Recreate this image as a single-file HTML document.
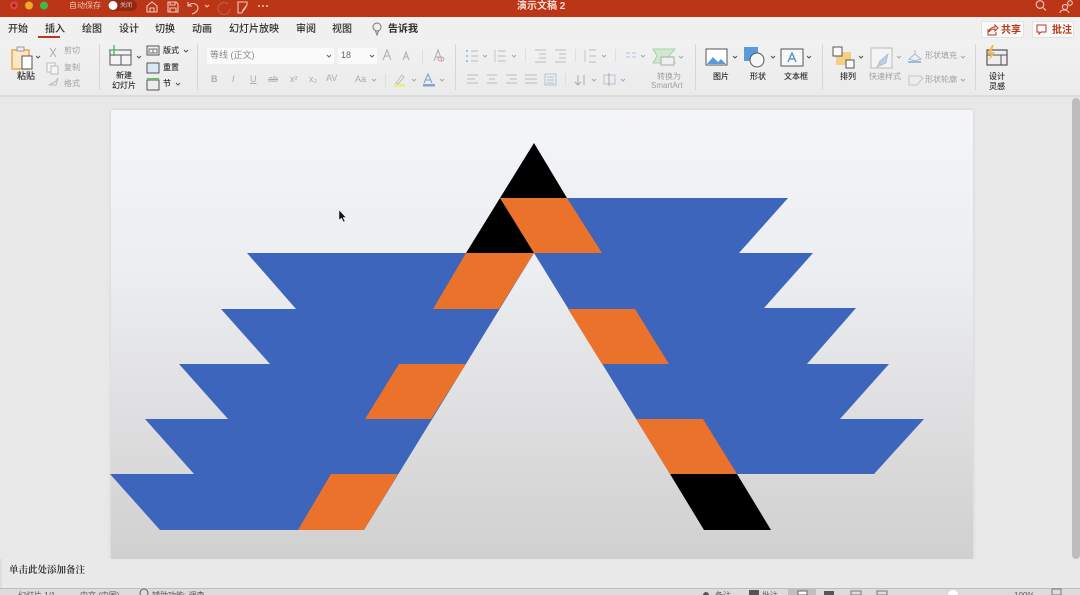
<!DOCTYPE html>
<html lang="zh"><head><meta charset="utf-8"><title>演示文稿2</title>
<style>
html,body{margin:0;padding:0;width:1080px;height:595px;overflow:hidden;background:#e8e8e8;font-family:"Liberation Sans","Noto Sans CJK SC",sans-serif;color:#333}
#w{position:absolute;left:0;top:0;width:1080px;height:595px;overflow:hidden;background:#e8e8e8;filter:blur(.35px)}
.a{position:absolute;white-space:nowrap;line-height:1}
#tb{position:absolute;left:0;top:0;width:1080px;height:17px;background:#bb3517}
#tabs{position:absolute;left:0;top:17px;width:1080px;height:25px;background:#f0f0f0}
#rib{position:absolute;left:0;top:42px;width:1080px;height:53px;background:linear-gradient(#f1f1f1,#ebebeb);border-bottom:2px solid #dcdcdc}
.t{font-size:10px;color:#2e2e2e;top:25px;font-weight:500}
.s{font-size:8px;color:#2e2e2e;font-weight:500}
.g{font-size:8px;color:#a0a0a0}
.sep{position:absolute;width:1px;background:#d6d6d6;top:44px;height:46px}
.sm{position:absolute;width:1px;background:#dedede}
#slide{position:absolute;left:111px;top:110px;width:862px;height:449px;background:linear-gradient(#f4f5f9 0%,#eceef1 35%,#e0e0e2 65%,#d0d0d0 100%);box-shadow:0 0 3px #ccc}
#notes{position:absolute;left:0;top:559px;width:1080px;height:29px;background:#e9e9e9;border-left:2px solid #ddd;box-sizing:border-box}
#status{position:absolute;left:0;top:588px;width:1080px;height:7px;background:#dcdcdc;border-top:1px solid #bdbdbd;box-sizing:border-box;overflow:hidden}
#sb{position:absolute;left:1072px;top:98px;width:8px;height:461px;background:#bdbdbd;border-radius:4px}
svg{position:absolute;overflow:visible}
.b{position:absolute;top:21px;height:17px;background:#fafafa;border:1px solid #e2e2e2;border-radius:2px;box-sizing:border-box;color:#b8381a;font-size:10px;font-weight:700;line-height:17px}
</style></head><body><div id="w">
<div id="tb"></div>
<svg style="left:0;top:0" width="1080" height="17" fill="none">
<circle cx="14" cy="5.500" r="4" fill="#e0443e"/><circle cx="14" cy="5.500" r="1.500" fill="#8f1f1a"/><circle cx="29" cy="5.500" r="4" fill="#f0a92a"/><circle cx="44" cy="5.500" r="4" fill="#3eb94a"/>
<rect x="108" y="0" width="29" height="11" rx="5.500" fill="#8e2a14"/><circle cx="113" cy="5.500" r="4.500" fill="#fff"/>
<g stroke="#efc9bd" stroke-width="1.100">
<path d="M147 6l5-4 5 4v6h-10zM150 12V8h4v4"/>
<path d="M168 2h8l2 2v8h-10zM170 2v3h5V2M170 12V8h6v4"/>
<path d="M188 2v4h4M188 6c3-4 10-3 10 2 0 3-3 5-6 6"/>
<path d="M205 5l2 2 2-2"/>
<path d="M228 4a6 6 0 1 0 2 5" stroke="#b9604a"/>
<path d="M238 2h9v3l-4 5-1 3h-4zM246 7l-3 4"/>
</g>
<circle cx="259" cy="6" r="1" fill="#efc9bd"/><circle cx="263" cy="6" r="1" fill="#efc9bd"/><circle cx="267" cy="6" r="1" fill="#efc9bd"/>
<g stroke="#efc9bd" stroke-width="1.100"><circle cx="1040" cy="4.500" r="3.800"/><path d="M1043 7.500l3 3"/><circle cx="1065" cy="7" r="2.600"/><path d="M1060 13c0-4 8-4 9 0"/><circle cx="1070" cy="3" r="2.300"/></g>
</svg>
<div class="a" style="left:69px;top:2px;font-size:8px;color:#eec5b8">自动保存</div>
<div class="a" style="left:120px;top:3px;font-size:6px;color:#eec5b8">关闭</div>
<div class="a" style="left:517px;top:2px;font-size:10px;color:#f6ded6;font-weight:700">演示文稿 2</div>

<div id="tabs"></div>
<div class="a t" style="left:8px">开始</div>
<div class="a t" style="left:45px">插入</div>
<div style="position:absolute;left:38px;top:36px;width:22px;height:2px;background:#b8381a"></div>
<div class="a t" style="left:82px">绘图</div>
<div class="a t" style="left:119px">设计</div>
<div class="a t" style="left:155px">切换</div>
<div class="a t" style="left:192px">动画</div>
<div class="a t" style="left:229px">幻灯片放映</div>
<div class="a t" style="left:296px">审阅</div>
<div class="a t" style="left:332px">视图</div>
<div class="a t" style="left:388px;font-weight:700">告诉我</div>
<svg style="left:371px;top:22px" width="12" height="14" fill="none" stroke="#777" stroke-width="1"><circle cx="6" cy="5" r="4"/><path d="M4.500 9l1.500 4 1.500-4"/></svg>
<div class="b" style="left:981px;width:43px;padding-left:19px">共享</div>
<div class="b" style="left:1032px;width:42px;padding-left:19px">批注</div>
<svg style="left:985px;top:24px" width="90" height="12" fill="none" stroke="#b8381a" stroke-width="1"><path d="M3 5v6h8V8M4 8c0-3 3-5 6-5V1l3 3-3 3V5c-3 0-5 1-6 3z"/><path d="M52 1h9v7h-5l-2 2V8h-2z"/></svg>

<div id="rib"></div>
<div class="sep" style="left:99px"></div><div class="sep" style="left:197px"></div><div class="sep" style="left:455px"></div><div class="sep" style="left:695px"></div><div class="sep" style="left:822px"></div><div class="sep" style="left:975px"></div>
<div class="sm" style="left:422px;top:50px;height:13px"></div><div class="sm" style="left:385px;top:74px;height:13px"></div>
<div class="sm" style="left:525px;top:49px;height:13px"></div><div class="sm" style="left:575px;top:49px;height:13px"></div><div class="sm" style="left:615px;top:49px;height:13px"></div><div class="sm" style="left:565px;top:73px;height:13px"></div>
<svg style="left:0;top:0" width="1080" height="95" fill="none">
<rect x="12" y="50" width="17" height="19" fill="#fbe6c7" stroke="#e8a94d" stroke-width="1.500"/><rect x="17" y="47" width="7" height="4" fill="#eee" stroke="#888" stroke-width=".8"/><rect x="22" y="56" width="10" height="13" fill="#fff" stroke="#555"/>
<path d="M36 56l2 2 2-2M137 56l2 2 2-2M184 50l2 2 2-2M176 83l2 2 2-2" stroke="#555"/>
<path d="M50 48l6 9M56 48l-6 9" stroke="#aab"/><rect x="47" y="63" width="8" height="9" fill="#f5f5f5" stroke="#bbb"/><rect x="51" y="66" width="7" height="8" fill="#f5f5f5" stroke="#bbb"/><path d="M49 85l6-3 3-4-2 7z" stroke="#bbb" fill="#eee"/>
<rect x="110" y="50" width="21" height="15" fill="#f3f3f3" stroke="#555"/><path d="M110 55h21M121 55v10" stroke="#555"/><path d="M114 45v11M109 50h10" stroke="#4cae50" stroke-width="1.300"/>
<rect x="147" y="46" width="12" height="9" stroke="#555"/><path d="M149 49h8v4h-8zM153 49v4" stroke="#777"/><rect x="147" y="63" width="12" height="10" stroke="#555" fill="#d9e8f5"/><rect x="147" y="80" width="12" height="10" stroke="#555"/><rect x="147" y="78" width="12" height="2" fill="#6fb36f"/>
<rect x="207" y="48" width="127" height="16" fill="#fafafa"/><rect x="338" y="48" width="39" height="16" fill="#fafafa"/>
<path d="M327 55l2 2 2-2M370 55l2 2 2-2" stroke="#666"/>
<path d="M383 60l4-10 4 10M385 56h4M403 60l3-8 3 8M404 57h4" stroke="#aaa"/><path d="M434 61l4-11 4 11M436 57h5" stroke="#aaa"/><ellipse cx="441" cy="59" rx="3" ry="2" stroke="#d99"/>
<path d="M471 51h7M471 56h7M471 61h7M498 51h8M498 56h8M498 61h8M535 50h11M539 54h7M539 58h7M535 62h11M555 50h11M559 54h7M559 58h7M555 62h11M589 50h7M589 56h7M589 62h7" stroke="#bcbcbc"/>
<circle cx="467" cy="51" r="1" fill="#8fb4d6"/><circle cx="467" cy="56" r="1" fill="#8fb4d6"/><circle cx="467" cy="61" r="1" fill="#8fb4d6"/>
<path d="M495 50v12M585 50v12" stroke="#c4c4c4"/>
<path d="M626 53h4M626 57h4M632 53h4M632 57h4" stroke="#a8c6de"/>
<path d="M653 49h22l-6 7 6 7h-22l4-7z" fill="#cfe8cf" stroke="#a8d4a8"/><rect x="661" y="57" width="13" height="8" fill="#f0f0f0" stroke="#aaa"/>
<path d="M467 75h11M467 79h8M467 83h11M487 75h10M489 79h6M487 83h10M506 75h11M510 79h7M506 83h11M525 75h12M525 79h12M525 83h12" stroke="#bcbcbc"/><rect x="545" y="74" width="11" height="11" stroke="#a8c6de"/><path d="M547 77h7M547 80h7M547 83h7" stroke="#bbb"/>
<path d="M578 75v10M575 82l3 3 3-3M584 75v10" stroke="#aaa"/><rect x="604" y="75" width="11" height="9" stroke="#a8c6de"/><path d="M609 73v13" stroke="#aaa"/>
<path d="M396 83l6-8 2 2-6 7z" fill="#f2f2f2" stroke="#bbb"/><rect x="394" y="84" width="11" height="2.500" fill="#f0ea7a"/>
<path d="M424 83l4-9 4 9M426 80h5" stroke="#7a9cc6"/><rect x="423" y="84" width="12" height="2.500" fill="#7fa3d6"/>
<path d="M483 55l2 2 2-2M512 55l2 2 2-2M602 55l2 2 2-2M641 55l2 2 2-2M679 56l2 2 2-2M372 79l2 2 2-2M412 79l2 2 2-2M440 79l2 2 2-2M592 79l2 2 2-2M621 79l2 2 2-2" stroke="#aaa"/>
<rect x="706" y="49" width="21" height="16" fill="#fff" stroke="#555"/><path d="M707 64l6-7 5 5 3-3 5 5z" fill="#5b9bdc"/>
<path d="M733 56l2 2 2-2M771 56l2 2 2-2M807 56l2 2 2-2M859 56l2 2 2-2" stroke="#555"/>
<rect x="744" y="47" width="14" height="14" fill="#5b9bdc"/><circle cx="757" cy="60" r="7" fill="#f6f6f6" stroke="#555"/>
<rect x="781" y="49" width="22" height="17" fill="#f8f8f8" stroke="#555"/><path d="M788 62l4-9 4 9M789.500 59h5" stroke="#4a86c6" stroke-width="1.200"/>
<rect x="836" y="52" width="15" height="13" fill="#f4cf85"/><rect x="833" y="47" width="9" height="9" fill="#fafafa" stroke="#555"/><rect x="846" y="60" width="8" height="8" fill="#fafafa" stroke="#555"/>
<rect x="871" y="48" width="21" height="20" fill="#f4f4f4" stroke="#bbb"/><path d="M877 67l3-6 8-7-2 9z" fill="#b8d0e6" stroke="#a8b8c8" stroke-width=".7"/>
<path d="M897 56l2 2 2-2M961 56l2 2 2-2M961 79l2 2 2-2" stroke="#aaa"/>
<path d="M909 59l6-5 6 5-6 2zM915 50v4" stroke="#a8b8c8"/><rect x="908" y="61" width="13" height="2" fill="#9dbad6"/>
<path d="M909 76h11l3 2-6 7h-8z" stroke="#b8c8d8"/>
<rect x="987" y="50" width="20" height="15" fill="#eee" stroke="#555" stroke-width="1.200"/><path d="M987 55h20M1001 55v10" stroke="#555"/><path d="M992 45l-5 9h4l-2 7 6-9h-4l3-7z" fill="#f0b84d"/>
</svg>
<div class="a s" style="left:17px;top:72px;font-size:9px">粘贴</div>
<div class="a g" style="left:64px;top:47px">剪切</div><div class="a g" style="left:64px;top:64px">复制</div><div class="a g" style="left:64px;top:80px">格式</div>
<div class="a s" style="left:116px;top:72px">新建</div><div class="a s" style="left:112px;top:82px">幻灯片</div>
<div class="a s" style="left:163px;top:47px">版式</div><div class="a s" style="left:163px;top:64px">重置</div><div class="a s" style="left:163px;top:80px">节</div>
<div class="a" style="left:210px;top:51px;font-size:9px;color:#888">等线 (正文)</div><div class="a" style="left:341px;top:51px;font-size:9px;color:#666">18</div>
<div class="a" style="left:211px;top:75px;font-size:9px;color:#aaa;font-weight:700">B</div><div class="a" style="left:232px;top:75px;font-size:9px;color:#aaa;font-style:italic">I</div><div class="a" style="left:250px;top:75px;font-size:9px;color:#aaa;text-decoration:underline">U</div><div class="a" style="left:268px;top:75px;font-size:9px;color:#aaa;text-decoration:line-through">ab</div><div class="a" style="left:290px;top:75px;font-size:9px;color:#aaa">x²</div><div class="a" style="left:309px;top:75px;font-size:9px;color:#aaa">x₂</div><div class="a" style="left:326px;top:74px;font-size:9px;color:#aaa">AV</div><div class="a" style="left:355px;top:75px;font-size:9px;color:#aaa">Aa</div>
<div class="a g" style="left:657px;top:73px">转换为</div><div class="a g" style="left:651px;top:82px">SmartArt</div>
<div class="a s" style="left:713px;top:73px">图片</div><div class="a s" style="left:750px;top:73px">形状</div><div class="a s" style="left:784px;top:73px">文本框</div><div class="a s" style="left:840px;top:73px">排列</div>
<div class="a g" style="left:869px;top:73px">快速样式</div><div class="a g" style="left:925px;top:52px">形状填充</div><div class="a g" style="left:925px;top:76px">形状轮廓</div>
<div class="a s" style="left:989px;top:73px">设计</div><div class="a s" style="left:989px;top:83px">灵感</div>

<div id="slide"></div>
<svg style="left:0;top:0" width="1080" height="595">
<path fill="#3c65bb" d="M247 253H534L364 530H160L110 474H194L145 419H228L179 364H270L221 309H296Z"/>
<path fill="#3c65bb" d="M567 198H788L739 253H813L764 308H856L807 364H889L840 419H924L874 474H670L534 253Z"/>
<path fill="#ea722a" d="M500 198H567L602 253H534ZM466 253H534L499 309H433ZM568 309H635L669 364H602ZM399 364H466L431 419H365ZM636 419H703L737 474H670ZM331 474H398L364 530H298Z"/>
<path fill="#000" d="M534 143L567 198H500ZM500 198L534 253H466ZM670 474H737L771 530H704Z"/>
<path fill="#111" stroke="#eee" stroke-width=".5" d="M339 210v10l2.500-2 2 4 1.500-.8-2-3.700h3z"/>
</svg>

<div id="sb"></div>
<div id="notes"></div>
<div class="a" style="left:9px;top:567px;font-size:9.500px;color:#3a3a3a;font-weight:700;font-family:'Liberation Serif','Noto Serif CJK SC',serif">单击此处添加备注</div>
<div id="status"></div>
<div class="a" style="left:18px;top:592px;font-size:8px;color:#555">幻灯片 1/1</div>
<div class="a" style="left:80px;top:592px;font-size:8px;color:#555">中文 (中国)</div>
<div class="a" style="left:152px;top:592px;font-size:8px;color:#555">辅助功能: 调查</div>
<div class="a" style="left:715px;top:592px;font-size:8px;color:#555">备注</div>
<div class="a" style="left:762px;top:592px;font-size:8px;color:#555">批注</div>
<div class="a" style="left:1014px;top:592px;font-size:8px;color:#555">100%</div>
<svg style="left:0;top:588px" width="1080" height="7" fill="none">
<circle cx="144" cy="5" r="4" stroke="#666"/><circle cx="706" cy="7" r="3" fill="#555"/>
<rect x="749" y="2" width="10" height="5" fill="#555"/><rect x="788" y="0" width="28" height="7" fill="#bfbfbf"/><rect x="798" y="3" width="9" height="4" fill="#fff" stroke="#666"/>
<rect x="824" y="3" width="10" height="4" fill="#555"/><rect x="851" y="3" width="10" height="4" stroke="#777"/><rect x="877" y="3" width="10" height="4" stroke="#777"/>
<circle cx="953" cy="7" r="5" fill="#fff"/><rect x="1052" y="1" width="9" height="6" stroke="#777"/>
</svg>
</div></body></html>
